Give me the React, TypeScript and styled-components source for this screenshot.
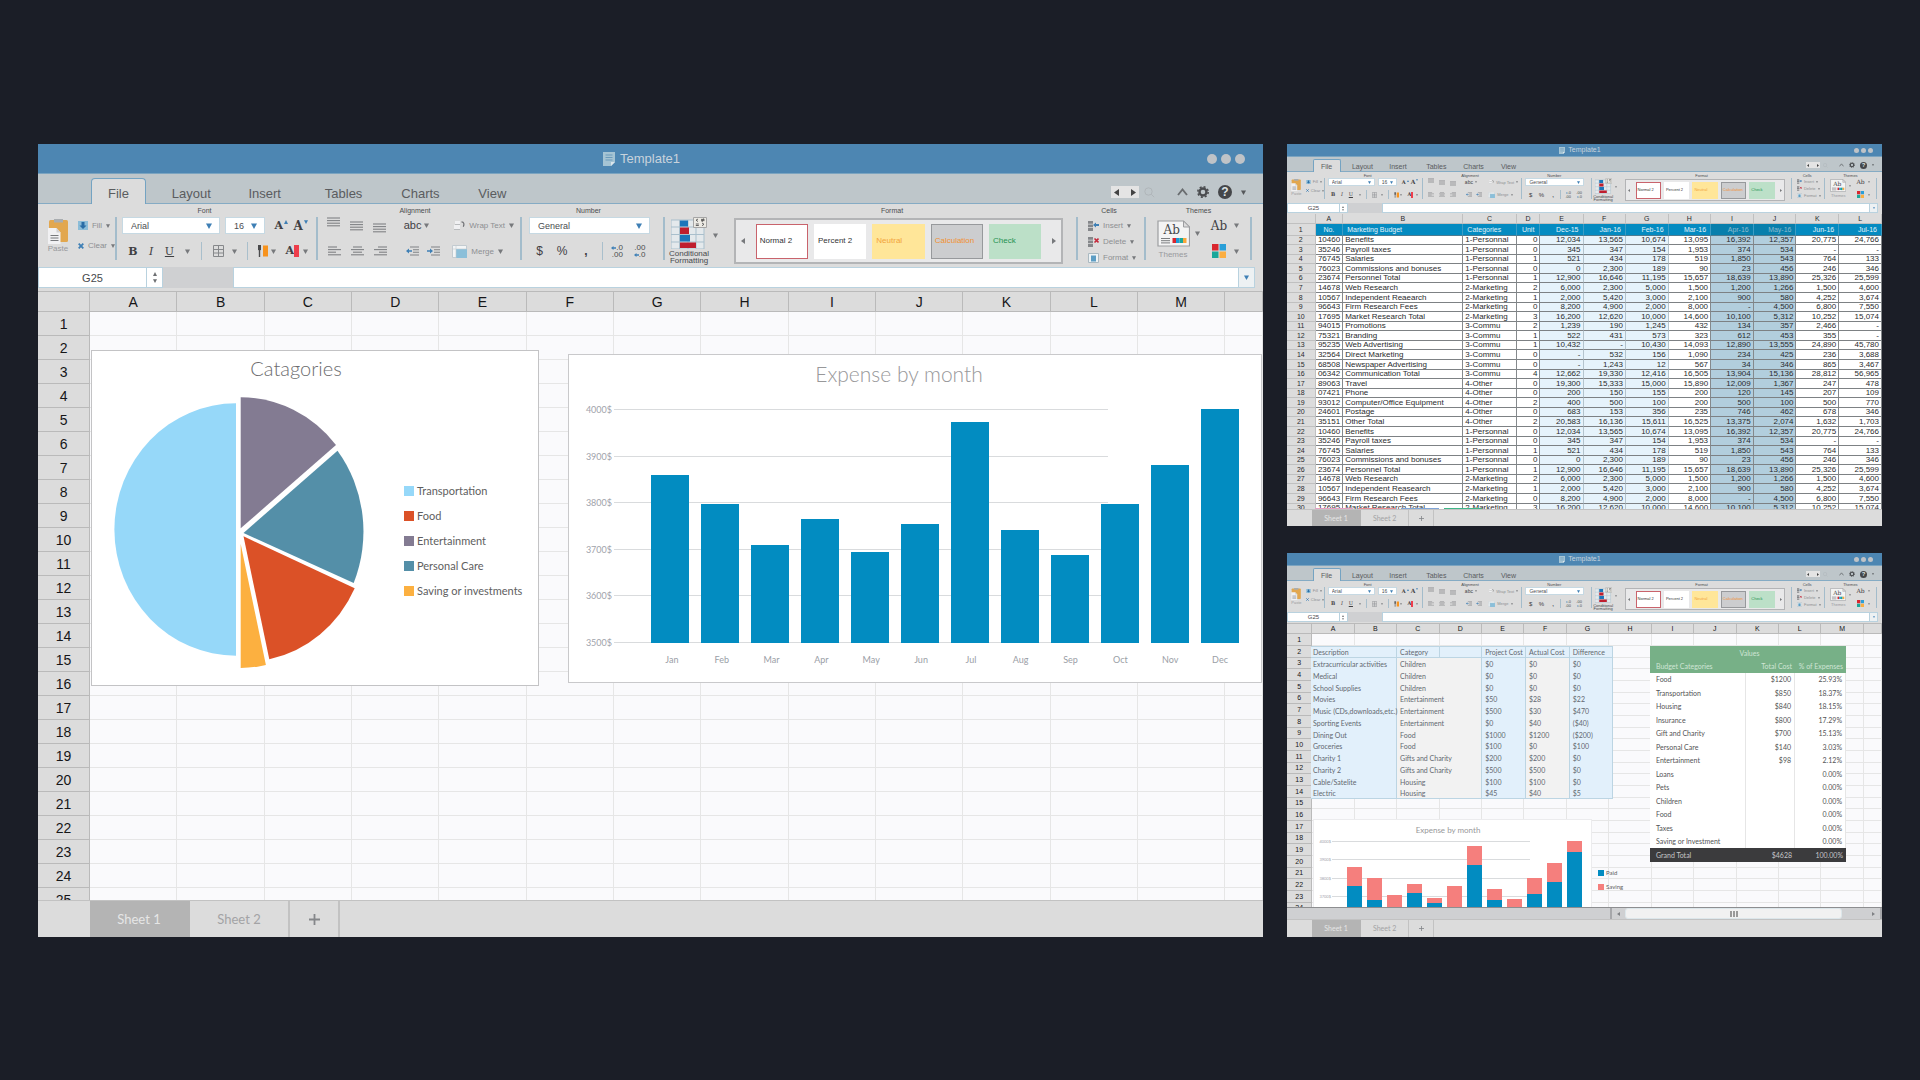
import React, { createContext, useContext } from "react";
import styled, { createGlobalStyle, css, ThemeProvider } from "styled-components";

/* ---------- scale helper: every window is drawn at full size or as a compact preview ---------- */

const FULL = { k: 1 };
const COMPACT = { k: 0.486 };

const u = (full: number, compact?: number) => ({ theme }: any) =>
  theme.k === 1 ? `${full}px` : `${compact ?? Math.max(1, Math.round(full * theme.k))}px`;

const SANS = `"Liberation Sans", Arial, sans-serif`;
const SOFT = `Lato, "Open Sans", sans-serif`;

const IdPrefix = createContext("main");

const GlobalStyle = createGlobalStyle`
  *, *::before, *::after { box-sizing: border-box; }
  body { margin: 0; background: #1b1e27; font-family: ${SANS}; }
  button, select, input { font-family: inherit; font-size: inherit; line-height: inherit; margin: 0; padding: 0; border: 0; border-radius: 0; background: none; color: inherit; }
  button { cursor: pointer; }
  table { border-collapse: separate; border-spacing: 0; }
  td, th { padding: 0; font-weight: 400; }
  svg { display: block; flex: none; }
  h2, p, ul { margin: 0; padding: 0; font-weight: inherit; }
`;

/* ---------- page ---------- */

const Page = styled.main`
  min-height: 100vh;
  display: grid;
  grid-template-columns: minmax(0, 1225fr) minmax(0, 595fr);
  gap: 24px;
  align-items: start;
  padding: 144px 38px;
`;

const SideColumn = styled.div`
  display: flex;
  flex-direction: column;
  gap: 27px;
`;

const WindowFrame = styled.section`
  display: flex;
  flex-direction: column;
  min-width: 0;
  overflow: hidden;
  background: #dcdcdc;
`;

/* ---------- title bar and tab bar ---------- */

const TitleBar = styled.header`
  height: ${u(30, 13)};
  display: grid;
  grid-template-columns: 1fr auto 1fr;
  align-items: center;
  padding-right: ${u(18)};
  background: #4d86b2;
  border-bottom: 1px solid #7ba4c0;
`;

const TitleText = styled.h2`
  grid-column: 2;
  display: flex;
  align-items: center;
  gap: ${u(5, 3)};
  font-size: ${u(13, 7)};
  line-height: ${u(16, 8)};
  color: #c8d3dc;
`;

const Dots = styled.div`
  justify-self: end;
  display: flex;
  gap: ${u(4)};
`;

const Dot = styled.button`
  width: ${u(10)};
  height: ${u(10)};
  border-radius: 50%;
  background: #bfc3c7;
`;

const TabBar = styled.nav`
  height: ${u(30, 15)};
  display: flex;
  align-items: flex-end;
  padding-left: 4.3%;
  padding-right: ${u(17)};
  background: #bec6ca;
  box-shadow: inset 0 -1px 0 #85abc4;
`;

const Tab = styled.button<{ $grow: number; $active?: boolean }>`
  flex: ${(p) => p.$grow} 1 0;
  min-width: 0;
  height: ${u(26, 13)};
  font-size: ${u(13, 7)};
  line-height: ${u(20, 10)};
  padding-top: ${u(5, 2)};
  text-align: center;
  color: #5a5c5f;
  ${(p) =>
    p.$active &&
    css`
      background: #dcdcdc;
      border: 1px solid #74a3c2;
      border-bottom: 0;
      border-radius: ${u(4)} ${u(4)} 0 0;
    `}
`;

const TabTools = styled.div`
  flex: 714 1 0;
  display: flex;
  align-items: center;
  justify-content: flex-end;
  gap: ${u(9, 5)};
  height: 100%;
  padding-top: ${u(8, 2)};
  padding-bottom: ${u(2, 1)};
`;

const Pager = styled.div`
  display: flex;
  align-items: center;
  justify-content: space-between;
  width: ${u(28)};
  height: ${u(12)};
  padding: 0 ${u(3)};
  background: #e4e4e4;
  margin-right: ${u(-4, -2)};
`;

const ToolGap = styled.span`
  width: ${u(4, 1)};
`;

const Plain = styled.button`
  display: flex;
  align-items: center;
  justify-content: center;
`;

/* ---------- ribbon ---------- */

const Ribbon = styled.div`
  height: ${u(63, 31)};
  display: grid;
  grid-template-columns:
    minmax(0, 79fr) minmax(0, 201fr) minmax(0, 204fr) minmax(0, 143fr)
    minmax(0, 69fr) minmax(0, 344fr) minmax(0, 68fr) minmax(0, 106fr) minmax(0, 11fr);
  background: #dcdcdc;
`;

const Group = styled.div`
  display: flex;
  flex-direction: column;
  min-width: 0;
`;

const GroupLabel = styled.div<{ $pad?: number }>`
  height: ${u(13, 6)};
  font-size: ${u(7, 4)};
  line-height: ${u(14, 7)};
  text-align: center;
  color: #4b4d50;
  padding-right: ${(p) => u(p.$pad ?? 10)(p)};
`;

const GroupBody = styled.div<{ $divider?: boolean }>`
  position: relative;
  display: flex;
  align-items: flex-start;
  height: ${u(50, 25)};
  &::after {
    content: "";
    display: ${(p) => (p.$divider === false ? "none" : "block")};
    width: ${u(2)};
    height: ${u(43)};
    margin-left: auto;
    flex: none;
    background: #a3bccb;
  }
`;

const Rows = styled.div<{ $grow?: number }>`
  flex: ${(p) => p.$grow ?? 1} 1 0;
  min-width: 0;
  display: grid;
  grid-template-rows: ${u(17)} ${u(18)};
  row-gap: ${u(8)};
`;

const Row = styled.div`
  display: flex;
  align-items: stretch;
`;

const Slot = styled.div<{ $w: number; $align?: string }>`
  flex: ${(p) => p.$w} 1 0;
  min-width: 0;
  display: flex;
  align-items: center;
  justify-content: ${(p) => p.$align ?? "center"};
`;

const ThinLine = styled.span`
  width: 1px;
  height: 100%;
  background: #a9bfcc;
`;

const SelectBox = styled.label`
  position: relative;
  display: flex;
  width: 100%;
  height: 100%;
`;

const Select = styled.select`
  appearance: none;
  width: 100%;
  height: 100%;
  padding-left: ${u(8, 3)};
  background: #fff;
  border: 1px solid #c6d9e3;
  font-size: ${u(9, 5)};
  line-height: ${u(12, 6)};
  color: #4b4d50;
`;

const SelectCaret = styled.span`
  position: absolute;
  right: ${u(8)};
  top: 0;
  bottom: 0;
  display: flex;
  align-items: center;
  pointer-events: none;
`;

const Glyph = styled.button<{ $size?: number; $serif?: boolean; $bold?: boolean; $italic?: boolean; $underline?: boolean }>`
  font-family: ${(p) => (p.$serif ? `"DejaVu Serif", "Liberation Serif", serif` : SANS)};
  font-size: ${(p) => u(p.$size ?? 11)(p)};
  line-height: 1;
  font-weight: ${(p) => (p.$bold ? 700 : 400)};
  font-style: ${(p) => (p.$italic ? "italic" : "normal")};
  text-decoration: ${(p) => (p.$underline ? "underline" : "none")};
  color: #3f4043;
  display: flex;
`;

const MutedButton = styled.button`
  display: flex;
  align-items: center;
  gap: ${u(4)};
  font-size: ${u(8, 4)};
  line-height: ${u(11, 5)};
  white-space: nowrap;
  color: #8d8f92;
`;

const StackButton = styled.button<{ $muted?: boolean }>`
  display: flex;
  flex-direction: column;
  align-items: center;
  gap: ${u(1)};
  font-size: ${u(8, 4)};
  line-height: ${u(7, 3)};
  color: ${(p) => (p.$muted ? "#98999c" : "#47494c")};
`;

const ButtonList = styled.div<{ $gap: number }>`
  display: flex;
  flex-direction: column;
  align-items: flex-start;
  gap: ${(p) => u(p.$gap)(p)};
  padding-top: ${u(3, 1)};
`;

const ClipSlot = styled.div`
  width: 51%;
  display: flex;
  justify-content: center;
  padding-top: ${u(2)};
`;

const Gallery = styled.div`
  flex: 1;
  display: flex;
  align-items: center;
  gap: ${u(6)};
  height: ${u(46)};
  margin: ${u(1)} ${u(13)} 0 0;
  background: #e9e9ea;
  border: ${u(2)} solid #b3b4b6;
`;

const GalleryArrow = styled.button`
  flex: 15 1 0;
  display: flex;
  justify-content: center;
`;

const StyleCard = styled.button<{ $bg: string; $fg: string; $edge?: string }>`
  flex: 52 1 0;
  min-width: 0;
  height: ${u(35)};
  padding-left: ${u(3)};
  text-align: left;
  font-size: ${u(8, 4)};
  line-height: ${u(12, 6)};
  white-space: nowrap;
  background: ${(p) => p.$bg};
  color: ${(p) => p.$fg};
  border: 1px solid ${(p) => p.$edge ?? p.$bg};
`;

/* ---------- formula bar ---------- */

const FormulaBar = styled.div`
  display: grid;
  grid-template-columns: minmax(0, 109fr) minmax(0, 16fr) minmax(0, 70fr) minmax(0, 1006fr) minmax(0, 16fr) minmax(0, 8fr);
  height: ${u(21, 10)};
  margin-bottom: ${u(3, 1)};
`;

const NameBox = styled.input`
  width: 100%;
  background: #fff;
  border: 1px solid #b9d2df;
  font-size: ${u(11, 6)};
  line-height: ${u(14, 7)};
  text-align: center;
  color: #47494c;
`;

const Spinner = styled.div`
  display: flex;
  flex-direction: column;
  align-items: center;
  justify-content: center;
  gap: ${u(3)};
  background: #fff;
  border: 1px solid #b9d2df;
  border-left: 0;
`;

const FormulaGap = styled.div`
  background: #cfd0d2;
`;

const FormulaInput = styled.input`
  width: 100%;
  min-width: 0;
  background: #fff;
  border: 1px solid #b9d2df;
  font-size: ${u(11, 6)};
`;

const FormulaMore = styled.button`
  display: flex;
  align-items: center;
  justify-content: center;
  background: #edf1f3;
  border: 1px solid #b9d2df;
  border-left: 0;
`;

/* ---------- sheets ---------- */

const SheetArea = styled.div<{ $height: number }>`
  position: relative;
  height: ${(p) => p.$height}px;
  overflow: hidden;
  background: #fafafc;
`;

const Col = styled.col<{ $share: number }>`
  width: ${(p) => p.$share}%;
`;

const GridTable = styled.table`
  width: 100%;
  table-layout: fixed;
  font-size: ${u(14, 7)};
  line-height: ${u(16, 8)};
  color: #161618;
  th {
    background: #dcdcdc;
    border-right: 1px solid #bababa;
    border-bottom: 1px solid #bababa;
    text-align: center;
  }
  thead th {
    height: ${u(21, 11)};
    border-top: 1px solid #bababa;
  }
  tbody th,
  td {
    height: ${u(24, 12)};
  }
  tbody tr:nth-child(3n) > * {
    height: ${u(24, 11)};
  }
  td {
    border-right: 1px solid #e6e6e6;
    border-bottom: 1px solid #e6e6e6;
  }
`;

const BudgetTable = styled.table`
  width: 100%;
  table-layout: fixed;
  font-size: 8px;
  line-height: 8px;
  color: #2a2b2d;
  white-space: nowrap;
  background: #fff;
  thead th,
  tbody th {
    background: #dcdcdc;
    font-size: 7px;
    text-align: center;
    border-right: 1px solid #c0c0c0;
    border-bottom: 1px solid #c0c0c0;
  }
  thead th {
    height: 10px;
  }
  tbody tr > * {
    height: 10px;
  }
  tbody tr:nth-child(7n + 2) > *,
  tbody tr:nth-child(7n + 4) > *,
  tbody tr:nth-child(7n + 6) > * {
    height: 9px;
  }
`;

const BudgetCell = styled.td<{ $tone?: "light" | "picked"; $left?: boolean }>`
  padding: 0 2px;
  overflow: hidden;
  text-align: ${(p) => (p.$left ? "left" : "right")};
  background: ${(p) => (p.$tone === "picked" ? "#b2cedd" : p.$tone === "light" ? "#e6f3fb" : "#fff")};
  border-right: 1px solid ${(p) => (p.$tone === "light" ? "#b4c4cd" : "#85898c")};
  border-bottom: 1px solid #7d8184;
`;

const BudgetHead = styled.td<{ $picked?: boolean; $align?: string }>`
  && {
    height: 12px;
  }
  padding: 0 4px;
  font-size: 7px;
  text-align: ${(p) => p.$align ?? "right"};
  background: ${(p) => (p.$picked ? "#087fac" : "#048bc1")};
  color: ${(p) => (p.$picked ? "#8fbccf" : "#e3f3fa")};
  border-right: 1px solid #3d9cc4;
  border-bottom: 1px solid #4d7c92;
`;

const AccentStrip = styled.div`
  position: absolute;
  left: 28px;
  bottom: 0;
  display: flex;
  gap: 5px;
`;

const Accent = styled.span<{ $color: string; $w: number }>`
  width: ${(p) => p.$w}px;
  height: 1px;
  background: ${(p) => p.$color};
`;

const SheetTabs = styled.div<{ $height: number }>`
  height: ${(p) => p.$height}px;
  display: grid;
  grid-template-columns: minmax(0, 52fr) minmax(0, 100fr) minmax(0, 100fr) minmax(0, 50fr) minmax(0, 923fr);
  background: #dcdcdc;
  border-top: 1px solid #c2c2c2;
  font-family: ${SOFT};
  font-size: ${u(13, 7)};
  line-height: ${u(18, 9)};
`;

const SheetTab = styled.button<{ $active?: boolean }>`
  border-right: ${u(2)} solid ${(p) => (p.$active ? "#b4b4b4" : "#c2c2c2")};
  background: ${(p) => (p.$active ? "#b4b4b4" : "transparent")};
  color: ${(p) => (p.$active ? "#e6e6e6" : "#a3a3a5")};
  display: flex;
  align-items: center;
  justify-content: center;
`;

const TabSpacer = styled.div``;

const ScrollBar = styled.div`
  display: grid;
  grid-template-columns: minmax(0, 325fr) minmax(0, 13fr) minmax(0, 217fr) minmax(0, 40fr);
  height: 12px;
  background: #cfd0d2;
  border-top: 1px solid #8d8e90;
`;

const ScrollTrack = styled.div`
  border-right: 2px solid #a6a7aa;
`;

const ScrollThumb = styled.button`
  display: flex;
  align-items: center;
  justify-content: center;
  gap: 1px;
  border-radius: 3px;
  background: #f1f1f1;
  border: 1px solid #dce6ea;
`;

const GripLine = styled.span`
  width: 2px;
  height: 6px;
  background: #9a9a9a;
`;

const ScrollArrow = styled.button<{ $end?: boolean }>`
  display: flex;
  align-items: center;
  justify-content: ${(p) => (p.$end ? "flex-end" : "center")};
  padding-right: ${(p) => (p.$end ? 5 : 0)}px;
  border-right: ${(p) => (p.$end ? "2px solid #a6a7aa" : "0")};
`;

/* ---------- charts over the sheet ---------- */

const ChartLayer = styled.div`
  position: absolute;
  inset: 0;
  display: grid;
  grid-template-columns: minmax(0, 448fr) minmax(0, 694fr);
  align-items: start;
  gap: 29px;
  padding: 59px 1px 0 53px;
  font-family: ${SOFT};
`;

const PieCard = styled.article`
  height: 336px;
  background: #fff;
  border: 1px solid #c3c3c5;
`;

const PieTitle = styled.h2`
  padding: 5px 38px 0 0;
  text-align: center;
  font-size: 20px;
  line-height: 24px;
  font-weight: 300;
  color: #6c6c6e;
`;

const PieRow = styled.div`
  display: flex;
  align-items: center;
  gap: 34px;
  padding: 14px 0 0 18px;
`;

const Legend = styled.ul<{ $small?: boolean }>`
  list-style: none;
  padding-top: ${(p) => (p.$small ? 47 : 16)}px;
  font-size: ${(p) => (p.$small ? 6 : 11)}px;
  line-height: ${(p) => (p.$small ? 14 : 25)}px;
  color: #5e5e60;
  white-space: nowrap;
`;

const LegendItem = styled.li<{ $color: string; $small?: boolean }>`
  display: flex;
  align-items: center;
  gap: ${(p) => (p.$small ? 2 : 3)}px;
  &::before {
    content: "";
    width: ${(p) => (p.$small ? 6 : 10)}px;
    height: ${(p) => (p.$small ? 6 : 10)}px;
    background: ${(p) => p.$color};
  }
`;

const BarCard = styled.article<{ $small?: boolean }>`
  flex: ${(p) => (p.$small ? "0 0 93%" : "none")};
  height: ${(p) => (p.$small ? 130 : 329)}px;
  margin-top: ${(p) => (p.$small ? 0 : 4)}px;
  padding-right: ${(p) => (p.$small ? 9 : 22)}px;
  background: #fff;
  border: 1px solid ${(p) => (p.$small ? "#ececee" : "#c9c9cb")};
`;

const BarTitle = styled.h2<{ $small?: boolean }>`
  padding: ${(p) => (p.$small ? "4px 0 5px 0" : "7px 10px 23px 0")};
  text-align: center;
  font-size: ${(p) => (p.$small ? 8 : 21)}px;
  line-height: ${(p) => (p.$small ? 12 : 24)}px;
  font-weight: ${(p) => (p.$small ? 400 : 300)};
  color: #98989a;
`;

const PlotRow = styled.div`
  display: flex;
`;

const Axis = styled.div<{ $small?: boolean }>`
  width: ${(p) => (p.$small ? 18 : 45)}px;
  height: ${(p) => (p.$small ? 93 : 234)}px;
  display: flex;
  flex-direction: column;
  justify-content: space-between;
  align-items: flex-end;
  padding-right: ${(p) => (p.$small ? 1 : 2)}px;
  font-size: ${(p) => (p.$small ? 4 : 9)}px;
  line-height: 1px;
  color: #9fa3ab;
`;

const Plot = styled.div<{ $small?: boolean }>`
  position: relative;
  flex: 1;
  height: ${(p) => (p.$small ? 93 : 234)}px;
`;

const GridLines = styled.div`
  position: absolute;
  inset: 0 21% 0 0;
  display: flex;
  flex-direction: column;
  justify-content: space-between;
`;

const GridLine = styled.span`
  height: 1px;
  background: #d9dbdd;
`;

const Bars = styled.div<{ $small?: boolean }>`
  position: relative;
  display: flex;
  align-items: flex-end;
  gap: ${(p) => (p.$small ? 5 : 12)}px;
  height: 100%;
  padding-left: ${(p) => (p.$small ? 15 : 37)}px;
`;

const Bar = styled.div<{ $h: number; $color: string }>`
  flex: 1;
  display: flex;
  align-items: flex-end;
  height: ${(p) => p.$h}px;
  background: ${(p) => p.$color};
`;

const BarPart = styled.div<{ $h: number }>`
  width: 100%;
  height: ${(p) => p.$h}px;
  background: #028cc1;
`;

const Months = styled.div`
  display: flex;
  gap: 12px;
  padding: 10px 0 0 84px;
  font-size: 9px;
  line-height: 14px;
  color: #9a9ea6;
  span {
    flex: 1;
    text-align: center;
  }
`;

/* ---------- budget report sheet ---------- */

const ReportLayer = styled.div`
  position: absolute;
  inset: 0;
  display: grid;
  grid-template-columns: minmax(0, 302fr) minmax(0, 196fr);
  column-gap: 37px;
  align-items: start;
  padding: 23px 36px 0 24px;
  font-family: ${SOFT};
`;

const CostTable = styled.table`
  width: 100%;
  table-layout: fixed;
  font-size: 7px;
  line-height: 9px;
  color: #626870;
  white-space: nowrap;
  tr > * {
    height: 12px;
  }
  tbody tr:nth-child(4n) > * {
    height: 11px;
  }
`;

const CostCell = styled.td<{ $tone: "blue" | "gray"; $indent?: number; $head?: boolean }>`
  padding-left: ${(p) => p.$indent ?? 3}px;
  text-align: left;
  background: ${(p) => (p.$tone === "blue" ? "#e2f0fb" : "#f2f2f2")};
  border-right: 1px solid #bcd5e3;
  border-top: ${(p) => (p.$head ? "1px solid #bcd5e3" : "0")};
  border-bottom: ${(p) => (p.$head ? "1px solid #bcd5e3" : "0")};
  tr:last-child > & {
    border-bottom: 1px solid #bcd5e3;
  }
`;

const ChartRow = styled.div`
  display: flex;
  align-items: flex-start;
  gap: 6px;
  padding: 20px 0 0 2px;
`;

const ValuesTable = styled.table`
  width: 100%;
  table-layout: fixed;
  font-size: 7px;
  line-height: 9px;
  color: #535355;
  background: #fff;
  white-space: nowrap;
  td,
  th {
    height: 13px;
    padding: 0 3px;
    text-align: right;
    border-right: 1px solid #e6e6e6;
  }
  td:first-child,
  th:first-child {
    text-align: left;
    padding-left: 6px;
  }
  tbody tr:nth-child(even) td {
    height: 14px;
  }
  thead th {
    background: #77b087;
    color: #cfe5d5;
    border: 0;
  }
  thead tr:first-child th {
    height: 14px;
    padding: 0 0 0 3px;
    text-align: center;
  }
  tfoot td {
    height: 14px;
    background: #3b3b3d;
    color: #c5c5c7;
    border: 0;
  }
`;

/* ---------- icons ---------- */

const Svg = styled.svg<{ $w: number; $h: number }>`
  width: ${(p) => u(p.$w)(p)};
  height: ${(p) => u(p.$h)(p)};
`;

const Caret = ({ color = "#77797c", w = 5 }: { color?: string; w?: number }) => (
  <Svg $w={w} $h={w} viewBox="0 0 6 6" aria-hidden>
    <path d="M0 .5h6L3 6z" fill={color} />
  </Svg>
);

const Triangle = ({ dir, color = "#444", w = 5, h = 7 }: { dir: "left" | "right" | "up"; color?: string; w?: number; h?: number }) => (
  <Svg $w={w} $h={h} viewBox="0 0 6 8" preserveAspectRatio="none" aria-hidden>
    <path d={dir === "left" ? "M6 0v8L0 4z" : dir === "right" ? "M0 0v8l6-4z" : "M0 8h6L3 0z"} fill={color} />
  </Svg>
);

const DocIcon = () => (
  <Svg $w={12} $h={14} viewBox="0 0 12 14" aria-hidden>
    <path d="M0 0h12v10l-4 4H0z" fill="#a5c4d4" />
    <path d="M2.500 3h7M2.500 5.500h7M2.500 8h7" stroke="#6b9bbb" />
    <path d="M8 14v-4h4z" fill="#dbe6ec" />
  </Svg>
);

const PasteIcon = () => (
  <Svg $w={20} $h={25} viewBox="0 0 20 25" aria-hidden>
    <rect x="1" y="1" width="19" height="22" rx="1.5" fill="#e2a74f" />
    <rect x="6" y="0" width="9" height="3.5" fill="#a9adb0" />
    <path d="M0 9h8.500l4 4.500V25H0z" fill="#f1f1f3" />
    <path d="M8.500 9v4.500h4z" fill="#cfcfd2" />
    <path d="M2.500 16.500h8M2.500 19h8M2.500 21.500h8" stroke="#77797c" />
  </Svg>
);

const FillIcon = () => (
  <Svg $w={10} $h={9} viewBox="0 0 10 9" aria-hidden>
    <path d="M0 0h10v9H0z" fill="#8cbdd8" />
    <path d="M3.500 1h3v3.500h2L5 8 1.500 4.500h2z" fill="#2a6da6" />
  </Svg>
);

const ClearIcon = ({ color = "#3e7fb5" }: { color?: string }) => (
  <Svg $w={6} $h={6} viewBox="0 0 6 6" aria-hidden>
    <path d="M.7.7l4.600 4.600M5.300.7L.7 5.300" stroke={color} strokeWidth="1.800" />
  </Svg>
);

const LinesIcon = ({ rows, w = 13 }: { rows: [number, number][]; w?: number }) => (
  <Svg $w={w} $h={10} viewBox="0 0 13 10" aria-hidden>
    {rows.map(([x, len], i) => (
      <path key={i} d={`M${x} ${1 + i * 2.6}h${len}`} stroke="#808285" strokeWidth="1.100" />
    ))}
  </Svg>
);

const Raise = styled.span<{ $y: number }>`
  display: flex;
  padding-bottom: ${(p) => (p.$y > 0 ? u(p.$y)(p) : "0")};
  padding-top: ${(p) => (p.$y < 0 ? u(-p.$y)(p) : "0")};
`;

const BordersIcon = () => (
  <Svg $w={11} $h={12} viewBox="0 0 11 12" aria-hidden>
    <path d="M.5.5h10v11H.5zM5.500.5v11M.5 4.500h10M.5 8h10" fill="none" stroke="#86888b" />
  </Svg>
);

const BrushIcon = () => (
  <Svg $w={11} $h={12} viewBox="0 0 11 12" aria-hidden>
    <path d="M2.500 12V4" stroke="#4a4a4c" strokeWidth="1.400" />
    <path d="M1 0h3v4.500L2.500 6 1 4.500z" fill="#4a4a4c" />
    <path d="M6 .5h5v11H6z" fill="#f7931e" />
  </Svg>
);

const IndentIcon = ({ out }: { out?: boolean }) => (
  <Svg $w={13} $h={10} viewBox="0 0 13 10" aria-hidden>
    <path d="M4 1h9M7 3.700h6M7 6.300h6M4 9h9" stroke="#808285" strokeWidth="1.100" />
    <path d={out ? "M0 5l3-2.500v1.700h3v1.600H3v1.700z" : "M6 5L3 2.500v1.700H0v1.600h3v1.700z"} fill="#3e7fb5" />
  </Svg>
);

const WrapIcon = () => (
  <Svg $w={11} $h={9} viewBox="0 0 11 9" aria-hidden>
    <path d="M1 0h5v3H1zM0 4h6v4H0z" fill="#f0f0f2" />
    <path d="M1 3.500h5M0 8.500h6" stroke="#b9bbbd" />
    <path d="M7.500.8c2.500.2 3 2.500 1.800 5" fill="none" stroke="#6d6f72" strokeWidth="1.200" />
  </Svg>
);

const MergeIcon = () => (
  <Svg $w={15} $h={13} viewBox="0 0 15 13" aria-hidden>
    <path d="M.5.5h14v12H.5z" fill="#f3f5f6" stroke="#c3cbd0" />
    <path d="M4 4h11v9H4z" fill="#8bbfd9" />
    <path d="M4 0v13M0 4h15" stroke="#c3cbd0" strokeWidth=".6" />
  </Svg>
);

const ConditionalIcon = () => (
  <Svg $w={36} $h={32} viewBox="0 0 36 32" aria-hidden>
    <path d="M0 3h33v29H0z" fill="#e4e9ec" />
    <path d="M0 3h33v29H0zM0 10h33M0 17.500h33M0 25h33M8.500 3v29M25 3v29M17 3v29" fill="none" stroke="#a9bfcc" />
    <path d="M9 3.500h8v6H9zM9 18h10v6.500H9z" fill="#1c75b9" />
    <path d="M9 10.500h9V17H9zM9 25.500h16V31H9z" fill="#bf1e2e" />
    <path d="M22.500.5h13v10h-13z" fill="#eceae4" stroke="#a5a5a5" />
    <path d="M27 2l-2 1.200L27 4.500M30 3.600h3.500M30 2.400h3.500M32.500 1.500l-1.500 3.500M24.800 7h3M24.800 8.500h3M31 6l2 1.300L31 8.700" fill="none" stroke="#555" strokeWidth=".9" />
  </Svg>
);

const CellsIcon = ({ kind }: { kind: "insert" | "delete" | "format" }) => (
  <Svg $w={11} $h={10} viewBox="0 0 11 10" aria-hidden>
    {kind === "format" ? (
      <>
        <path d="M.5.5h10v9H.5z" fill="#eef3f5" stroke="#aab9c1" />
        <path d="M3 2.500h5v6H3z" fill="#5c9dc4" />
      </>
    ) : (
      <>
        <path d="M0 0h5v2.700H0zM0 3.500h5v2.700H0zM0 7h5v3H0z" fill="#85878a" />
        {kind === "insert" ? (
          <path d="M5 4l3-2.500V3h3v2H8v1.500z" fill="#3e7fb5" />
        ) : (
          <path d="M6.500 1.500l4 4M10.500 1.500l-4 4" stroke="#c4283a" strokeWidth="1.600" />
        )}
      </>
    )}
  </Svg>
);

const ThemePage = styled.span`
  position: relative;
  display: flex;
`;

const ThemeLetters = styled.span`
  position: absolute;
  left: ${u(7)};
  top: ${u(4, 1)};
  font-family: "DejaVu Serif", serif;
  font-size: ${u(12, 6)};
  line-height: ${u(12, 7)};
  color: #47494c;
`;

const ThemeIcon = () => (
  <ThemePage>
    <Svg $w={33} $h={27} viewBox="0 0 33 27" aria-hidden>
      <path d="M1 1h25.500l6 6v19H1z" fill="#f4f4f4" stroke="#9c9da0" strokeWidth="1.200" />
      <path d="M26.500 1v6h6z" fill="#dcdcdc" stroke="#9c9da0" />
      <path d="M4 18.500h9M4 20.700h9M4 22.900h9" stroke="#6d6f72" strokeWidth=".9" />
      <path d="M15.500 18h3.500v5h-3.500z" fill="#d9262e" />
      <path d="M19 18h3.500v5H19z" fill="#1c9ad6" />
      <path d="M22.500 18H26v5h-3.500z" fill="#1aa79a" />
      <path d="M26 18h3.500v5H26z" fill="#f9a63a" />
    </Svg>
    <ThemeLetters>Ab</ThemeLetters>
  </ThemePage>
);

const PaletteIcon = () => (
  <Svg $w={14} $h={14} viewBox="0 0 14 14" aria-hidden>
    <path d="M0 0h6.500v6.500H0z" fill="#d9262e" />
    <path d="M7.500 0H14v6.500H7.500z" fill="#2a9fd8" />
    <path d="M0 7.500h6.500V14H0z" fill="#1aa79a" />
    <path d="M7.500 7.500H14V14H7.500z" fill="#fbae42" />
  </Svg>
);

const SearchIcon = () => (
  <Svg $w={11} $h={11} viewBox="0 0 11 11" aria-hidden>
    <circle cx="4.500" cy="4.500" r="3.700" fill="none" stroke="#b0b6ba" />
    <path d="M7.200 7.200l3 3" stroke="#b0b6ba" />
  </Svg>
);

const ChevronIcon = () => (
  <Svg $w={11} $h={8} viewBox="0 0 11 8" aria-hidden>
    <path d="M1 7l4.500-5.500L10 7" fill="none" stroke="#6a6d70" strokeWidth="1.900" />
  </Svg>
);

const GearIcon = () => (
  <Svg $w={12} $h={12} viewBox="-6 -6 12 12" aria-hidden>
    <circle r="3.500" fill="none" stroke="#4a4c4f" strokeWidth="2.400" />
    <circle r="5.200" fill="none" stroke="#4a4c4f" strokeWidth="1.500" strokeDasharray="2.040 2.040" />
  </Svg>
);

const HelpBadge = styled.button`
  width: ${u(14)};
  height: ${u(14)};
  border-radius: 50%;
  background: #444649;
  color: #dfe2e4;
  font-size: ${u(12, 6)};
  line-height: ${u(14)};
  font-weight: 700;
  text-align: center;
`;

const DecimalBox = styled.span`
  display: flex;
  flex-direction: column;
  font-size: ${u(8, 4)};
  line-height: ${u(7, 4)};
  color: #4a4c4f;
  span {
    display: flex;
    align-items: center;
    justify-content: flex-end;
  }
`;

const DecimalArrow = () => (
  <Svg $w={5} $h={4} viewBox="0 0 5 4" aria-hidden>
    <path d="M0 2l2.500-2v1.300H5v1.400H2.500V4z" fill="#3e7fb5" />
  </Svg>
);

const DecimalIcon = ({ flip }: { flip?: boolean }) => (
  <DecimalBox>
    <span>{!flip && <DecimalArrow />}{flip ? ".00" : ".0"}</span>
    <span>{flip && <DecimalArrow />}{flip ? ".0" : ".00"}</span>
  </DecimalBox>
);

const FontSize = styled.span`
  display: flex;
  align-items: flex-start;
  gap: 1px;
`;

const RedBar = styled.span`
  width: ${u(5)};
  height: ${u(12)};
  background: #ee3e4c;
`;

/* ---------- window chrome ---------- */

const TABS: [string, number][] = [
  ["File", 54],
  ["Layout", 91],
  ["Insert", 57],
  ["Tables", 102],
  ["Charts", 53],
  ["View", 92],
];

const FULL_LINES: [number, number][] = [[0, 13], [0, 13], [0, 13], [0, 13]];

function PickList({ id, label, value }: { id: string; label: string; value: string }) {
  const prefix = useContext(IdPrefix);
  return (
    <SelectBox htmlFor={`${prefix}-${id}`}>
      <Select id={`${prefix}-${id}`} aria-label={label} defaultValue={value}>
        <option>{value}</option>
      </Select>
      <SelectCaret>
        <Caret color="#3e7fb5" w={6} />
      </SelectCaret>
    </SelectBox>
  );
}

function RibbonBar() {
  return (
    <Ribbon>
      <Group>
        <GroupLabel />
        <GroupBody>
          <ClipSlot>
            <StackButton $muted>
              <PasteIcon />
              Paste
            </StackButton>
          </ClipSlot>
          <ButtonList $gap={9}>
            <MutedButton><FillIcon />Fill<Caret w={4} /></MutedButton>
            <MutedButton><ClearIcon />Clear<Caret w={4} /></MutedButton>
          </ButtonList>
        </GroupBody>
      </Group>

      <Group>
        <GroupLabel $pad={26}>Font</GroupLabel>
        <GroupBody>
          <Rows>
            <Row>
              <Slot $w={5} />
              <Slot $w={99}><PickList id="font" label="Font" value="Arial" /></Slot>
              <Slot $w={5} />
              <Slot $w={40}><PickList id="size" label="Font size" value="16" /></Slot>
              <Slot $w={7} />
              <Slot $w={20}><Glyph $serif $bold aria-label="Grow font"><FontSize>A<Triangle dir="up" color="#3e7fb5" w={4} h={4} /></FontSize></Glyph></Slot>
              <Slot $w={19}><Glyph $serif $bold $size={12} aria-label="Shrink font"><FontSize>A<Caret color="#3e7fb5" w={4} /></FontSize></Glyph></Slot>
              <Slot $w={6} />
            </Row>
            <Row>
              <Slot $w={7} />
              <Slot $w={18}><Glyph $serif $bold>B</Glyph></Slot>
              <Slot $w={19}><Glyph $serif $italic>I</Glyph></Slot>
              <Slot $w={18}><Glyph $serif $underline>U</Glyph></Slot>
              <Slot $w={18}><Caret /></Slot>
              <Slot $w={10}><ThinLine /></Slot>
              <Slot $w={25}><Plain aria-label="Borders"><BordersIcon /></Plain></Slot>
              <Slot $w={7}><Caret /></Slot>
              <Slot $w={20}><ThinLine /></Slot>
              <Slot $w={10}><Plain aria-label="Fill color"><BrushIcon /></Plain></Slot>
              <Slot $w={12}><Caret /></Slot>
              <Slot $w={5} />
              <Slot $w={16}><Glyph $serif $bold aria-label="Font color">A<RedBar /></Glyph></Slot>
              <Slot $w={11}><Caret /></Slot>
              <Slot $w={5} />
            </Row>
          </Rows>
        </GroupBody>
      </Group>

      <Group>
        <GroupLabel>Alignment</GroupLabel>
        <GroupBody>
          <Rows>
            <Row>
              <Slot $w={5} />
              <Slot $w={22}><Plain aria-label="Align top"><Raise $y={7}><LinesIcon rows={FULL_LINES} /></Raise></Plain></Slot>
              <Slot $w={24}><Plain aria-label="Align middle"><LinesIcon rows={FULL_LINES} /></Plain></Slot>
              <Slot $w={22}><Plain aria-label="Align bottom"><Raise $y={-5}><LinesIcon rows={FULL_LINES} /></Raise></Plain></Slot>
              <Slot $w={12} />
              <Slot $w={20}><Glyph>abc</Glyph></Slot>
              <Slot $w={9}><Caret /></Slot>
              <Slot $w={23} />
              <Slot $w={66} $align="flex-start"><MutedButton><WrapIcon />Wrap Text<Caret /></MutedButton></Slot>
            </Row>
            <Row>
              <Slot $w={5} />
              <Slot $w={24}><Plain aria-label="Align left"><LinesIcon rows={[[0, 9], [0, 13], [0, 8], [0, 13]]} /></Plain></Slot>
              <Slot $w={22}><Plain aria-label="Align center"><LinesIcon rows={[[2, 9], [0, 13], [2, 9], [0, 13]]} /></Plain></Slot>
              <Slot $w={24}><Plain aria-label="Align right"><LinesIcon rows={[[4, 9], [0, 13], [5, 8], [0, 13]]} /></Plain></Slot>
              <Slot $w={9} />
              <Slot $w={22}><Plain aria-label="Decrease indent"><IndentIcon out /></Plain></Slot>
              <Slot $w={20}><Plain aria-label="Increase indent"><IndentIcon /></Plain></Slot>
              <Slot $w={9} />
              <Slot $w={68} $align="flex-start"><MutedButton><MergeIcon />Merge<Caret /></MutedButton></Slot>
            </Row>
          </Rows>
        </GroupBody>
      </Group>

      <Group>
        <GroupLabel>Number</GroupLabel>
        <GroupBody>
          <Rows>
            <Row>
              <Slot $w={7} />
              <Slot $w={121}><PickList id="number" label="Number format" value="General" /></Slot>
              <Slot $w={13} />
            </Row>
            <Row>
              <Slot $w={7} />
              <Slot $w={21}><Glyph $size={12}>$</Glyph></Slot>
              <Slot $w={24}><Glyph $size={12}>%</Glyph></Slot>
              <Slot $w={24}><Glyph $size={12} $bold>,</Glyph></Slot>
              <Slot $w={8}><ThinLine /></Slot>
              <Slot $w={22}><Plain aria-label="Increase decimals"><DecimalIcon /></Plain></Slot>
              <Slot $w={23}><Plain aria-label="Decrease decimals"><DecimalIcon flip /></Plain></Slot>
              <Slot $w={12} />
            </Row>
          </Rows>
        </GroupBody>
      </Group>

      <Group>
        <GroupLabel />
        <GroupBody $divider={false}>
          <Slot $w={48}>
            <StackButton>
              <ConditionalIcon />
              <span>Conditional<br />Formatting</span>
            </StackButton>
          </Slot>
          <Slot $w={21} $align="flex-start"><Raise $y={-16}><Caret /></Raise></Slot>
        </GroupBody>
      </Group>

      <Group>
        <GroupLabel $pad={28}>Format</GroupLabel>
        <GroupBody>
          <Gallery>
            <GalleryArrow aria-label="Previous styles"><Triangle dir="left" color="#77797c" w={4} h={6} /></GalleryArrow>
            <StyleCard $bg="#ffffff" $fg="#333335" $edge="#c9636c">Normal 2</StyleCard>
            <StyleCard $bg="#ffffff" $fg="#333335">Percent 2</StyleCard>
            <StyleCard $bg="#ffe699" $fg="#f2a33c">Neutral</StyleCard>
            <StyleCard $bg="#cccdcf" $fg="#f2902f" $edge="#97999c">Calculation</StyleCard>
            <StyleCard $bg="#bce0c8" $fg="#1f9150">Check</StyleCard>
            <GalleryArrow aria-label="Next styles"><Triangle dir="right" color="#77797c" w={4} h={6} /></GalleryArrow>
          </Gallery>
        </GroupBody>
      </Group>

      <Group>
        <GroupLabel $pad={6}>Cells</GroupLabel>
        <GroupBody>
          <Slot $w={10} />
          <Slot $w={56} $align="flex-start">
            <ButtonList $gap={5}>
              <MutedButton><CellsIcon kind="insert" />Insert<Caret w={4} /></MutedButton>
              <MutedButton><CellsIcon kind="delete" />Delete<Caret w={4} /></MutedButton>
              <MutedButton><CellsIcon kind="format" />Format<Caret w={4} /></MutedButton>
            </ButtonList>
          </Slot>
        </GroupBody>
      </Group>

      <Group>
        <GroupLabel $pad={1}>Themes</GroupLabel>
        <GroupBody>
          <Slot $w={10} />
          <Slot $w={34}>
            <Raise $y={-3}><StackButton $muted><ThemeIcon /><Raise $y={-3}>Themes</Raise></StackButton></Raise>
          </Slot>
          <Slot $w={14}><Raise $y={-14}><Caret /></Raise></Slot>
          <Rows $grow={46}>
            <Row>
              <Slot $w={26}><Glyph $serif $size={12}>Ab</Glyph></Slot>
              <Slot $w={14} $align="flex-start"><Caret /></Slot>
            </Row>
            <Row>
              <Slot $w={26}><Plain aria-label="Theme colors"><PaletteIcon /></Plain></Slot>
              <Slot $w={14} $align="flex-start"><Caret /></Slot>
            </Row>
          </Rows>
        </GroupBody>
      </Group>
    </Ribbon>
  );
}

function Chrome() {
  return (
    <>
      <TitleBar>
        <TitleText><DocIcon />Template1</TitleText>
        <Dots>
          <Dot aria-label="Minimize" />
          <Dot aria-label="Zoom" />
          <Dot aria-label="Close" />
        </Dots>
      </TitleBar>
      <TabBar>
        {TABS.map(([name, grow], i) => (
          <Tab key={name} $grow={grow} $active={i === 0}>{name}</Tab>
        ))}
        <TabTools>
          <Pager>
            <Plain aria-label="Back"><Triangle dir="left" /></Plain>
            <Plain aria-label="Forward"><Triangle dir="right" /></Plain>
          </Pager>
          <Plain aria-label="Search"><SearchIcon /></Plain>
          <ToolGap />
          <Plain aria-label="Collapse ribbon"><ChevronIcon /></Plain>
          <Plain aria-label="Settings"><GearIcon /></Plain>
          <HelpBadge>?</HelpBadge>
          <Plain aria-label="More"><Caret color="#55585b" /></Plain>
        </TabTools>
      </TabBar>
      <RibbonBar />
      <FormulaBar>
        <NameBox aria-label="Cell name" defaultValue="G25" />
        <Spinner>
          <Triangle dir="up" w={4} h={4} color="#6d6f72" />
          <Caret w={4} color="#6d6f72" />
        </Spinner>
        <FormulaGap />
        <FormulaInput aria-label="Formula" />
        <FormulaMore aria-label="Expand formula bar"><Caret color="#3e7fb5" /></FormulaMore>
      </FormulaBar>
    </>
  );
}

function SheetTabBar({ height }: { height: number }) {
  return (
    <SheetTabs $height={height}>
      <TabSpacer />
      <SheetTab $active>Sheet 1</SheetTab>
      <SheetTab>Sheet 2</SheetTab>
      <SheetTab aria-label="Add sheet">
        <Svg $w={11} $h={11} viewBox="0 0 11 11" aria-hidden>
          <path d="M5.500 0v11M0 5.500h11" stroke="#85878a" strokeWidth="1.800" />
        </Svg>
      </SheetTab>
      <TabSpacer />
    </SheetTabs>
  );
}

const LETTERS = "ABCDEFGHIJKLM".split("");

function BlankGrid({ rows }: { rows: number }) {
  return (
    <GridTable>
      <colgroup>
        <Col $share={4.25} />
        {LETTERS.map((l) => <Col key={l} $share={7.13} />)}
        <Col $share={3.06} />
      </colgroup>
      <thead>
        <tr>
          <th />
          {LETTERS.map((l) => <th key={l}>{l}</th>)}
          <th />
        </tr>
      </thead>
      <tbody>
        {Array.from({ length: rows }, (_, r) => (
          <tr key={r}>
            <th>{r + 1}</th>
            {LETTERS.map((l) => <td key={l} />)}
            <td />
          </tr>
        ))}
      </tbody>
    </GridTable>
  );
}

/* ---------- charts ---------- */

const PIE_LEGEND: [string, string][] = [
  ["Transportation", "#96d8f9"],
  ["Food", "#db5127"],
  ["Entertainment", "#837b92"],
  ["Personal Care", "#548fa8"],
  ["Saving or investments", "#fcb040"],
];

const PieDrawing = () => (
  <svg width="260" height="277" viewBox="110 395 260 277" role="img" aria-label="Share of expenses by category">
    <path d="M236 404.300A121.600 126.200 0 0 0 236 656.700z" fill="#96d8f9" />
    <path d="M240.700 529.300V398.300A123.600 131 0 0 1 336 446z" fill="#837b92" />
    <path d="M243.500 534L337.500 451.700A121 130.700 0 0 1 353.700 584z" fill="#548fa8" />
    <path d="M243.500 537.300L354.700 589.300A121 128 0 0 1 269.300 660.300z" fill="#db5127" />
    <path d="M240.700 545L265.900 666A121 127 0 0 1 240.700 669z" fill="#fcb040" />
  </svg>
);

const MONTHS = ["Jan", "Feb", "Mar", "Apr", "May", "Jun", "Jul", "Aug", "Sep", "Oct", "Nov", "Dec"];
const SPEND = [168, 139, 98, 124, 91, 119, 221, 113, 88, 139, 178, 234];
const STACK: [number, number][] = [
  [67, 48], [56, 34], [39, 20], [50, 41], [36, 31], [48, 20],
  [88, 69], [45, 34], [35, 20], [56, 40], [71, 52], [93, 82],
];
const LEVELS = ["4000$", "3900$", "3800$", "3700$", "3600$", "3500$"];

function ExpenseChart({ small }: { small?: boolean }) {
  return (
    <BarCard $small={small}>
      <BarTitle $small={small}>Expense by month</BarTitle>
      <PlotRow>
        <Axis $small={small}>{LEVELS.map((l) => <span key={l}>{l}</span>)}</Axis>
        <Plot $small={small}>
          <GridLines>{LEVELS.map((l) => <GridLine key={l} />)}</GridLines>
          <Bars $small={small}>
            {MONTHS.map((m, i) =>
              small ? (
                <Bar key={m} $h={STACK[i][0]} $color="#f57f7d"><BarPart $h={STACK[i][1]} /></Bar>
              ) : (
                <Bar key={m} $h={SPEND[i]} $color="#028cc1" />
              )
            )}
          </Bars>
        </Plot>
      </PlotRow>
      {!small && <Months>{MONTHS.map((m) => <span key={m}>{m}</span>)}</Months>}
    </BarCard>
  );
}

/* ---------- marketing budget sheet ---------- */

const BUDGET_COLS = [28.5, 27.6, 120, 53.4, 23.6, 43, 42.4, 42.6, 42.4, 42.6, 42.7, 42.7, 42.6];
const BUDGET_HEAD = ["No.", "Marketing Budget", "Categories", "Unit", "Dec-15", "Jan-16", "Feb-16", "Mar-16", "Apr-16", "May-16", "Jun-16", "Jul-16"];

const BUDGET = `10460|Benefits|1-Personnal|0|12,034|13,565|10,674|13,095|16,392|12,357|20,775|24,766
35246|Payroll taxes|1-Personnal|0|345|347|154|1,953|374|534|-|-
76745|Salaries|1-Personnal|1|521|434|178|519|1,850|543|764|133
76023|Commissions and bonuses|1-Personnal|0|0|2,300|189|90|23|456|246|346
23674|Personnel Total|1-Personnal|1|12,900|16,646|11,195|15,657|18,639|13,890|25,326|25,599
14678|Web Research|2-Marketing|2|6,000|2,300|5,000|1,500|1,200|1,266|1,500|4,600
10567|Independent Reaearch|2-Marketing|1|2,000|5,420|3,000|2,100|900|580|4,252|3,674
96643|Firm Research Fees|2-Marketing|0|8,200|4,900|2,000|8,000|-|4,500|6,800|7,550
17695|Market Research Total|2-Marketing|3|16,200|12,620|10,000|14,600|10,100|5,312|10,252|15,074
94015|Promotions|3-Commu|2|1,239|190|1,245|432|134|357|2,466|-
75321|Branding|3-Commu|1|522|431|573|323|612|453|355|-
95235|Web Advertising|3-Commu|1|10,432|-|10,430|14,093|12,890|13,555|24,890|45,780
32564|Direct Marketing|3-Commu|0|-|532|156|1,090|234|425|236|3,688
68508|Newspaper Advertising|3-Commu|0|-|1,243|12|567|34|346|865|3,467
06342|Communication Total|3-Commu|4|12,662|19,330|12,416|16,505|13,904|15,136|28,812|56,965
89063|Travel|4-Other|0|19,300|15,333|15,000|15,890|12,009|1,367|247|478
07421|Phone|4-Other|0|200|150|155|200|120|145|207|109
93012|Computer/Office Equipment|4-Other|2|400|500|100|200|500|100|500|770
24601|Postage|4-Other|0|683|153|356|235|746|462|678|346
35151|Other Total|4-Other|2|20,583|16,136|15,611|16,525|13,375|2,074|1,632|1,703`
  .split("\n")
  .map((line) => line.split("|"));

const REPEATED = BUDGET.slice(0, 9).map((row) => row.map((c) => c.replace("Reaearch", "Reasearch")));
const BUDGET_ROWS = [...BUDGET, ...REPEATED];

function BudgetSheet() {
  return (
    <>
      <BudgetTable>
        <colgroup>
          {BUDGET_COLS.map((w, i) => <Col key={i} $share={(w / 595) * 100} />)}
        </colgroup>
        <thead>
          <tr>
            <th />
            {LETTERS.slice(0, 12).map((l) => <th key={l}>{l}</th>)}
          </tr>
        </thead>
        <tbody>
          <tr>
            <th>1</th>
            {BUDGET_HEAD.map((h, i) => (
              <BudgetHead key={h} $picked={i === 8 || i === 9} $align={i === 0 || i === 3 ? "center" : i < 3 ? "left" : "right"}>{h}</BudgetHead>
            ))}
          </tr>
          {BUDGET_ROWS.map((row, r) => (
            <tr key={r}>
              <th>{r + 2}</th>
              {row.map((cell, i) => (
                <BudgetCell
                  key={i}
                  $left={i === 1 || i === 2}
                  $tone={i === 8 || i === 9 ? "picked" : i >= 4 && i <= 6 ? "light" : undefined}
                >
                  {cell}
                </BudgetCell>
              ))}
            </tr>
          ))}
        </tbody>
      </BudgetTable>
      <AccentStrip>
        <Accent $color="#e79fc4" $w={38} />
        <Accent $color="#e98d95" $w={38} />
        <Accent $color="#7fa5d8" $w={38} />
        <Accent $color="#3fb88a" $w={38} />
      </AccentStrip>
    </>
  );
}

/* ---------- project cost sheet ---------- */

const COSTS = [
  ["Extracurricular activities", "Children", "$0", "$0", "$0"],
  ["Medical", "Children", "$0", "$0", "$0"],
  ["School Supplies", "Children", "$0", "$0", "$0"],
  ["Movies", "Entertainment", "$50", "$28", "$22"],
  ["Music (CDs,downloads,etc.)", "Entertainment", "$500", "$30", "$470"],
  ["Sporting Events", "Entertainment", "$0", "$40", "($40)"],
  ["Dining Out", "Food", "$1000", "$1200", "($200)"],
  ["Groceries", "Food", "$100", "$0", "$100"],
  ["Charity 1", "Gifts and Charity", "$200", "$200", "$0"],
  ["Charity 2", "Gifts and Charity", "$500", "$500", "$0"],
  ["Cable/Satelite", "Housing", "$100", "$100", "$0"],
  ["Electric", "Housing", "$45", "$40", "$5"],
];

const VALUES = [
  ["Food", "$1200", "25.93%"],
  ["Transportation", "$850", "18.37%"],
  ["Housing", "$840", "18.15%"],
  ["Insurance", "$800", "17.29%"],
  ["Gift and Charity", "$700", "15.13%"],
  ["Personal Care", "$140", "3.03%"],
  ["Entertainment", "$98", "2.12%"],
  ["Loans", "", "0.00%"],
  ["Pets", "", "0.00%"],
  ["Children", "", "0.00%"],
  ["Food", "", "0.00%"],
  ["Taxes", "", "0.00%"],
  ["Saving or Investment", "", "0.00%"],
];

function ReportSheet() {
  return (
    <ReportLayer>
      <div>
        <CostTable>
          <colgroup>
            {[28.5, 14.2, 14, 14.5, 14.5, 14.3].map((w, i) => <Col key={i} $share={w} />)}
          </colgroup>
          <thead>
            <tr>
              <CostCell as="th" $tone="blue" $indent={2} $head>Description</CostCell>
              <CostCell as="th" $tone="blue" $head>Category</CostCell>
              <CostCell as="th" $tone="blue" $head />
              <CostCell as="th" $tone="blue" $head>Project Cost</CostCell>
              <CostCell as="th" $tone="blue" $head>Actual Cost</CostCell>
              <CostCell as="th" $tone="blue" $head>Difference</CostCell>
            </tr>
          </thead>
          <tbody>
            {COSTS.map(([name, category, project, actual, diff]) => (
              <tr key={name}>
                <CostCell $tone="blue" $indent={2}>{name}</CostCell>
                <CostCell $tone="gray" colSpan={2}>{category}</CostCell>
                <CostCell $tone="blue">{project}</CostCell>
                <CostCell $tone="gray">{actual}</CostCell>
                <CostCell $tone="blue">{diff}</CostCell>
              </tr>
            ))}
          </tbody>
        </CostTable>
        <ChartRow>
          <ExpenseChart small />
          <Legend $small>
            <LegendItem $small $color="#028cc1">Paid</LegendItem>
            <LegendItem $small $color="#f57f7d">Saving</LegendItem>
          </Legend>
        </ChartRow>
      </div>
      <ValuesTable>
        <colgroup>
          <Col $share={49} />
          <Col $share={25} />
          <Col $share={26} />
        </colgroup>
        <thead>
          <tr><th colSpan={3}>Values</th></tr>
          <tr><th>Budget Categories</th><th>Total Cost</th><th>% of Expenses</th></tr>
        </thead>
        <tbody>
          {VALUES.map(([name, cost, share], i) => (
            <tr key={i}><td>{name}</td><td>{cost}</td><td>{share}</td></tr>
          ))}
        </tbody>
        <tfoot>
          <tr><td>Grand Total</td><td>$4628</td><td>100.00%</td></tr>
        </tfoot>
      </ValuesTable>
    </ReportLayer>
  );
}

/* ---------- app ---------- */

export default function App() {
  return (
    <>
      <GlobalStyle />
      <Page>
        <ThemeProvider theme={FULL}>
          <WindowFrame>
            <Chrome />
            <SheetArea $height={609}>
              <BlankGrid rows={25} />
              <ChartLayer>
                <PieCard>
                  <PieTitle>Catagories</PieTitle>
                  <PieRow>
                    <PieDrawing />
                    <Legend>
                      {PIE_LEGEND.map(([name, color]) => <LegendItem key={name} $color={color}>{name}</LegendItem>)}
                    </Legend>
                  </PieRow>
                </PieCard>
                <ExpenseChart />
              </ChartLayer>
            </SheetArea>
            <SheetTabBar height={37} />
          </WindowFrame>
        </ThemeProvider>
        <ThemeProvider theme={COMPACT}>
          <SideColumn>
            <IdPrefix.Provider value="budget">
              <WindowFrame>
                <Chrome />
                <SheetArea $height={295}>
                  <BudgetSheet />
                </SheetArea>
                <SheetTabBar height={17} />
              </WindowFrame>
            </IdPrefix.Provider>
            <IdPrefix.Provider value="report">
              <WindowFrame>
                <Chrome />
                <SheetArea $height={284}>
                  <BlankGrid rows={24} />
                  <ReportSheet />
                </SheetArea>
                <ScrollBar>
                  <ScrollTrack />
                  <ScrollArrow aria-label="Scroll left"><Triangle dir="left" w={6} h={8} color="#808285" /></ScrollArrow>
                  <ScrollThumb aria-label="Scroll thumb"><GripLine /><GripLine /><GripLine /></ScrollThumb>
                  <ScrollArrow $end aria-label="Scroll right"><Triangle dir="right" w={6} h={8} color="#808285" /></ScrollArrow>
                </ScrollBar>
                <SheetTabBar height={18} />
              </WindowFrame>
            </IdPrefix.Provider>
          </SideColumn>
        </ThemeProvider>
      </Page>
    </>
  );
}
